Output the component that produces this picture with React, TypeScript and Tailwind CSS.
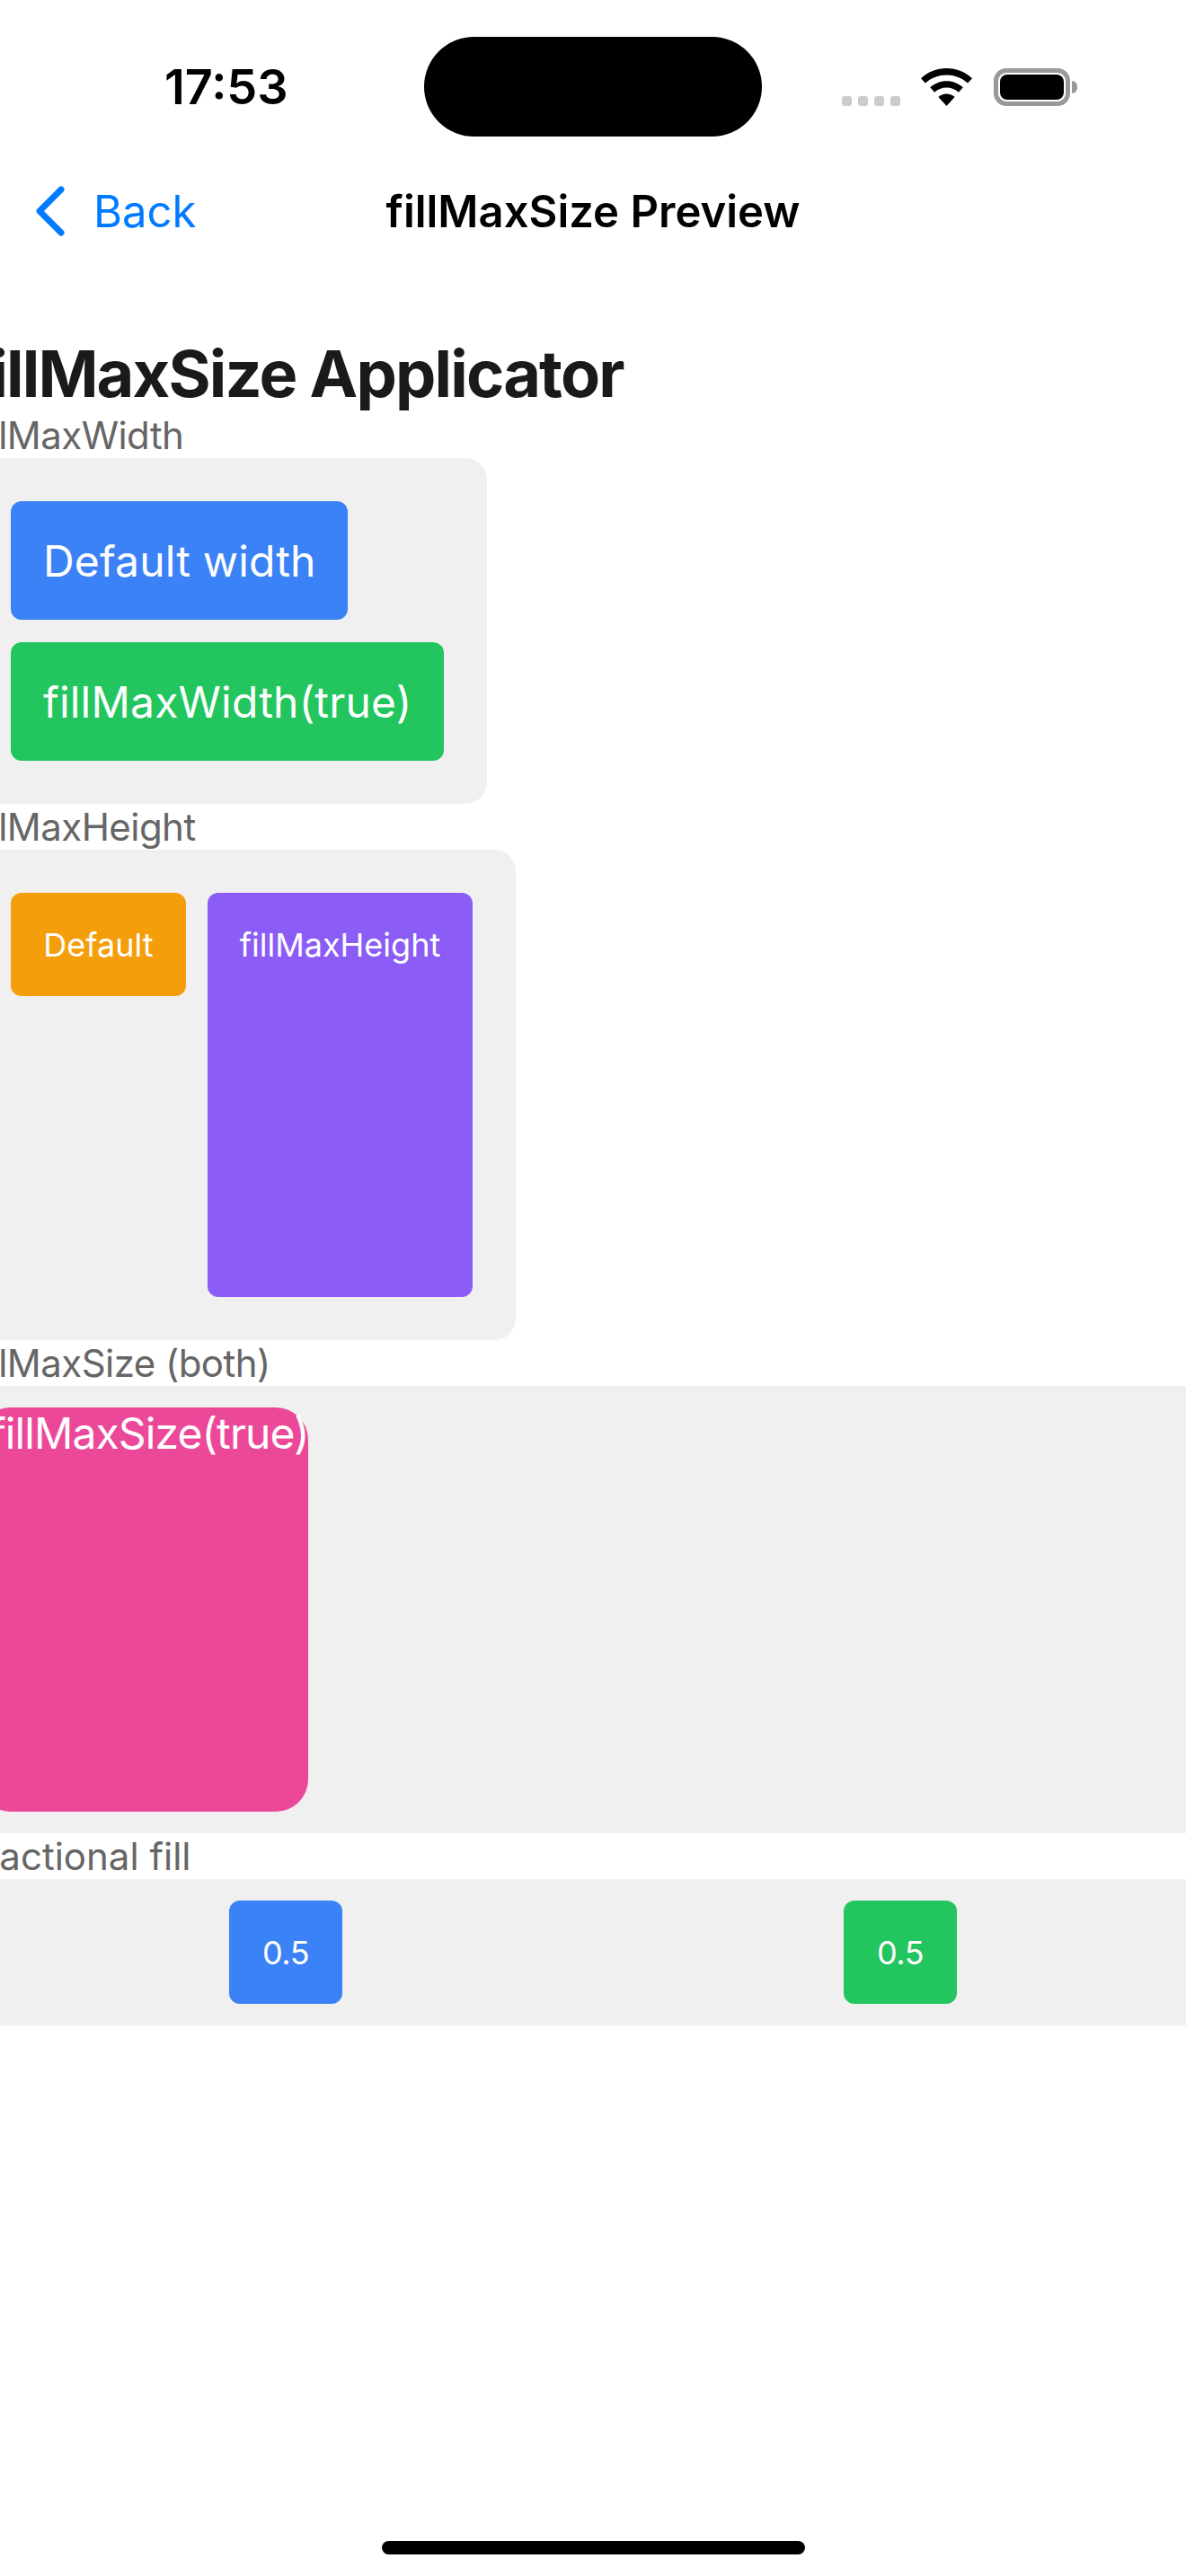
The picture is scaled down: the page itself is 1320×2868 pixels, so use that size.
import React from 'react';

function Wifi() {
  return (
    <svg width="57" height="42" viewBox="0 0 57 42" fill="#000">
      <path d="M28.5 0C39.5 0 49.5 4.2 57 11.2L52.2 16.6C46 10.8 37.6 7.4 28.5 7.4S11 10.8 4.800 16.600L0 11.200C7.500 4.200 17.500 0 28.500 0Z" />
      <path d="M28.500 14.200C35.600 14.200 42 16.900 46.800 21.300L41.900 26.800C38.400 23.600 33.700 21.600 28.500 21.600S18.600 23.600 15.100 26.800L10.200 21.300C15 16.900 21.400 14.200 28.500 14.200Z" />
      <path d="M28.500 28.500C32 28.500 35.200 29.800 37.600 32L28.500 42L19.400 32C21.800 29.800 25 28.500 28.500 28.500Z" />
    </svg>
  );
}

function Battery() {
  return (
    <div className="flex items-center ml-[1px]">
      <div className="w-[85px] h-[42px] rounded-[14px] border-[5px] border-[#999999] p-[2px]">
        <div className="w-full h-full rounded-[8px] bg-black" />
      </div>
      <div className="w-[6px] h-[14px] ml-[2px] rounded-r-full bg-[#999999]" />
    </div>
  );
}

function StatusBar() {
  return (
    <div className="flex items-center h-[111px] mt-[41px] pl-[183px]">
      <span className="w-[289px] text-[54px] leading-none font-semibold text-black">17:53</span>
      <div className="w-[376px] h-[111px] rounded-[56px] bg-black" />
      <div className="flex items-center h-[42px] pl-[89px]">
        <div className="flex gap-[7px] self-end mr-[23px]">
          {[0, 1, 2, 3].map(i => <div key={i} className="w-[11px] h-[11px] rounded-[3px] bg-[#cccccc]" />)}
        </div>
        <div className="mr-[23px]"><Wifi /></div>
        <Battery />
      </div>
    </div>
  );
}

function NavBar() {
  return (
    <div className="grid grid-cols-[1fr_auto_1fr] items-center h-[84px] mt-[41px]">
      <div className="flex items-center pl-[40px]">
        <svg width="32" height="56" viewBox="0 0 32 56" fill="none" stroke="#007AFF" strokeWidth="7" strokeLinecap="round" strokeLinejoin="round">
          <path d="M28 4L4 28L28 52" />
        </svg>
        <span className="ml-[32px] text-[49px] leading-none text-[#007AFF]">Back</span>
      </div>
      <span className="text-[49px] leading-none font-semibold text-black">fillMaxSize Preview</span>
      <div />
    </div>
  );
}

function Label({ text, className = 'ml-[-36px] tracking-[-0.55px]' }: { text: string; className?: string }) {
  return <p className={`h-[51px] text-[42px] leading-[51px] text-[#666666] whitespace-nowrap ${className}`}>{text}</p>;
}

function Box({ text, className }: { text: string; className: string }) {
  return <div className={`flex rounded-[12px] text-white whitespace-nowrap ${className}`}>{text}</div>;
}

export default function App() {
  return (
    <div className="w-[1320px] h-[2868px] overflow-hidden bg-white flex flex-col font-['Inter',sans-serif]">
      <StatusBar />
      <NavBar />

      <div className="flex flex-col items-start mt-[98px]">
        <h1 className="ml-[-38px] h-[84px] text-[72px] leading-[82px] tracking-[-1.85px] font-bold text-[#1a1a1a] whitespace-nowrap">fillMaxSize Applicator</h1>
        <Label text="fillMaxWidth" />

        <div className="ml-[-36px] p-[48px] rounded-[24px] bg-[#f0f0f0] flex flex-col items-start gap-[25px]">
          <Box text="Default width" className="h-[132px] w-[375px] px-[36px] pt-[2px] items-center text-[48px] tracking-[0.15px] bg-[#3b82f6]" />
          <Box text="fillMaxWidth(true)" className="h-[132px] w-[482px] px-[36px] pt-[2px] items-center text-[48px] tracking-[0.2px] bg-[#22c55e]" />
        </div>

        <Label text="fillMaxHeight" />

        <div className="ml-[-36px] p-[48px] rounded-[24px] bg-[#f0f0f0] flex gap-[24px]">
          <Box text="Default" className="h-[115px] w-[195px] items-center justify-center text-[36px] bg-[#f59e0b]" />
          <Box text="fillMaxHeight" className="h-[450px] w-[295px] pt-[36px] justify-center text-[36px] leading-[44px] bg-[#8b5cf6]" />
        </div>

        <Label text="fillMaxSize (both)" />

        <div className="w-[1320px] h-[498px] py-[24px] bg-[#f0f0f0] flex">
          <div className="ml-[-24px] w-[367px] h-full pl-[13px] rounded-[36px] bg-[#ec4899] text-[48px] leading-[58px] tracking-[-0.9px] text-white whitespace-nowrap">fillMaxSize(true)</div>
        </div>

        <Label text="fractional fill" className="ml-[-32px]" />

        <div className="ml-[-24px] w-[1368px] py-[24px] bg-[#f0f0f0] grid grid-cols-2">
          <div className="flex justify-center">
            <Box text="0.5" className="h-[115px] w-[126px] items-center justify-center text-[36px] tracking-[-0.5px] bg-[#3b82f6]" />
          </div>
          <div className="flex justify-center">
            <Box text="0.5" className="h-[115px] w-[126px] items-center justify-center text-[36px] tracking-[-0.5px] bg-[#22c55e]" />
          </div>
        </div>
      </div>

      <div className="mt-auto mb-[24px] mx-auto w-[471px] h-[15px] rounded-full bg-black" />
    </div>
  );
}
